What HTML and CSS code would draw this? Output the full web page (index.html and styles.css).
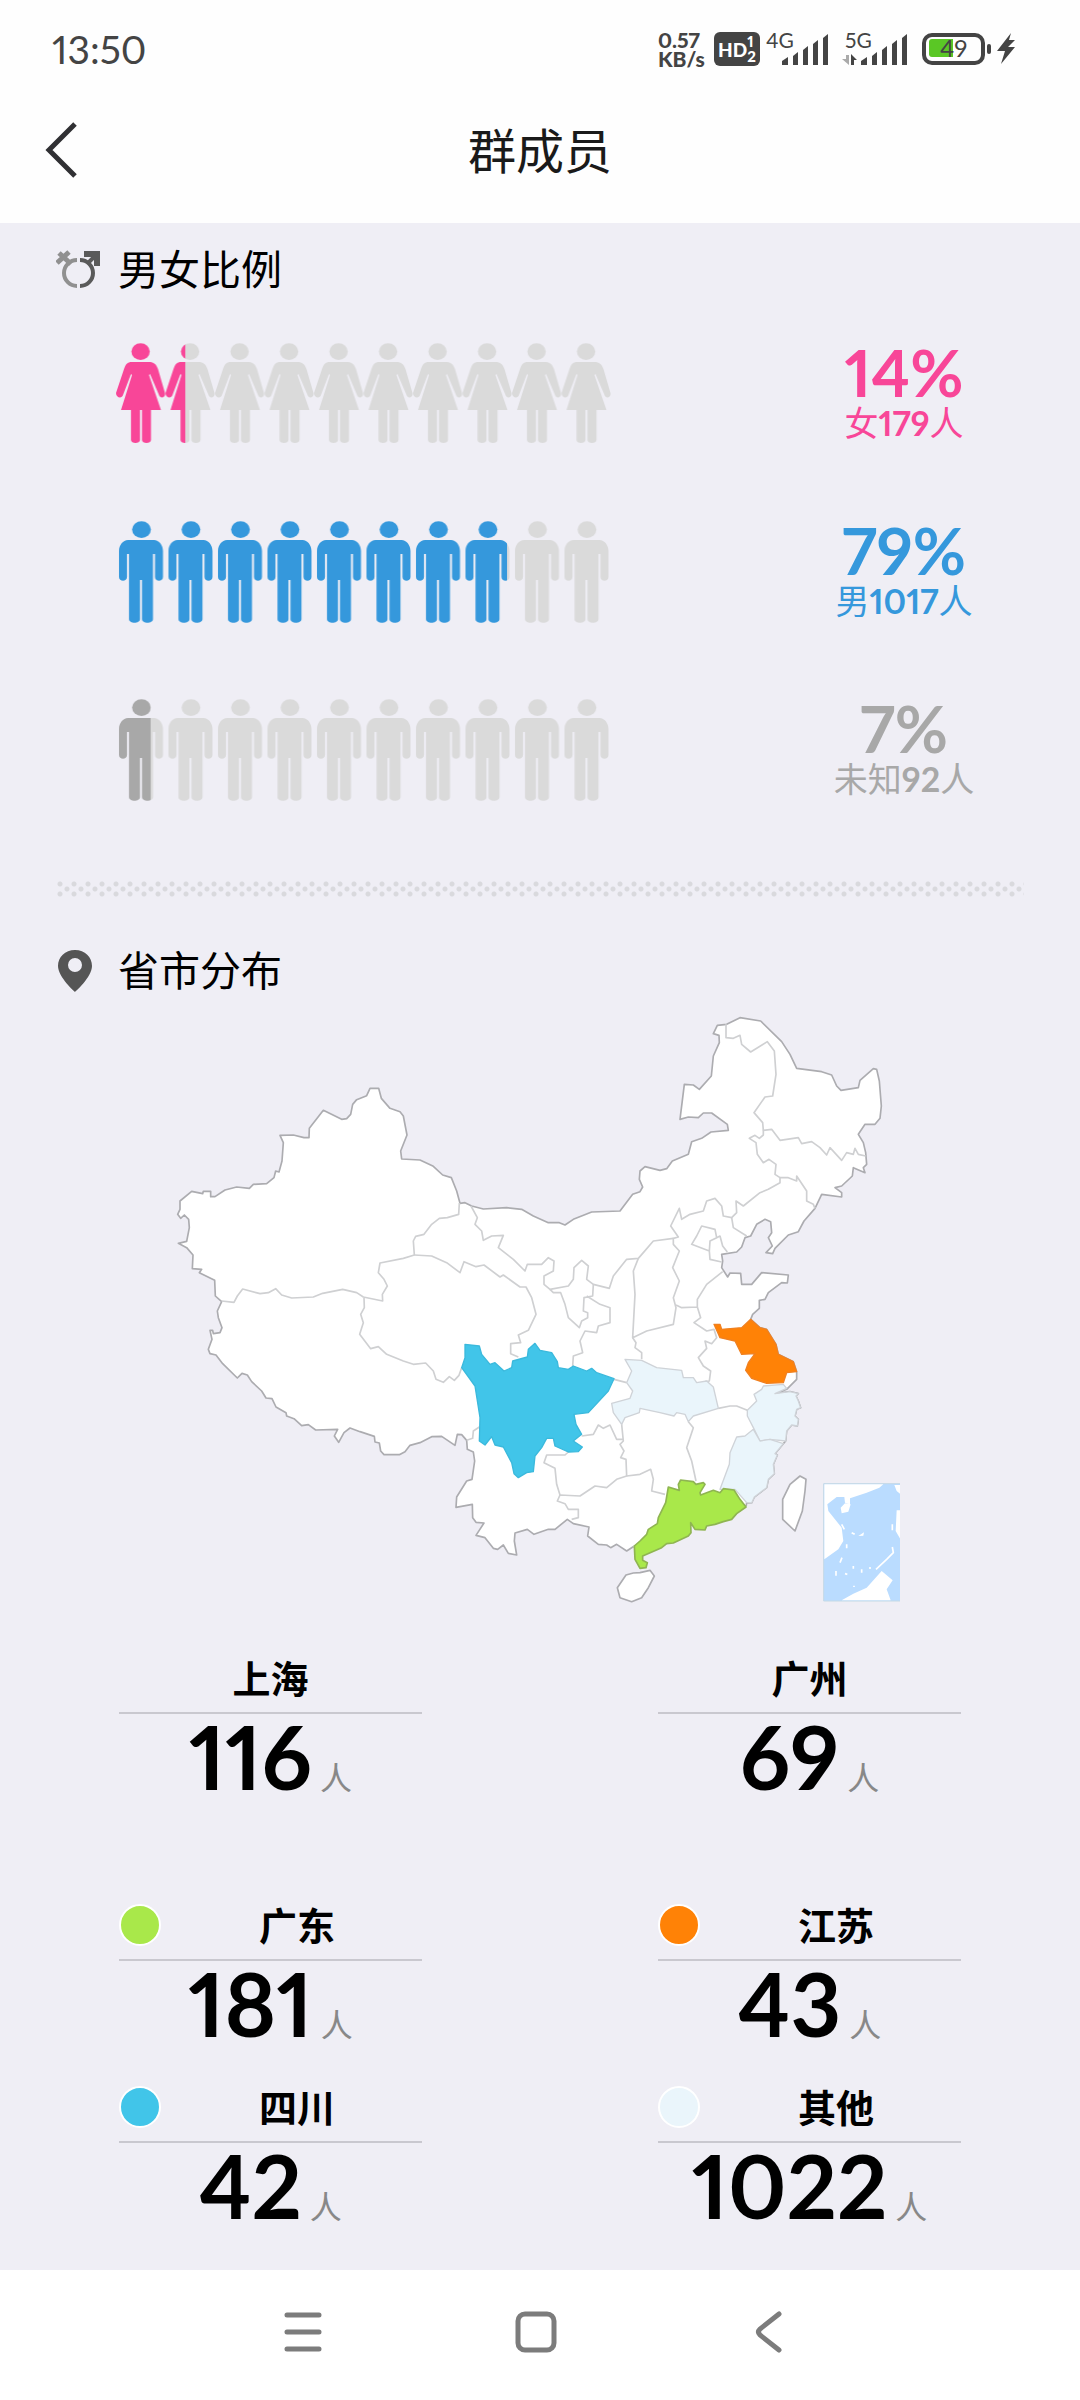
FILE: index.html
```html
<!DOCTYPE html>
<html lang="zh-CN">
<head>
<meta charset="utf-8">
<meta name="viewport" content="width=device-width, initial-scale=1">
<title>群成员</title>
<link rel="stylesheet" href="styles.css">
</head>
<body>
<div class="page">
  <div class="status-bar">
    <time class="clock">13:50</time>
    <div class="status-icons">
      <div class="net-speed"><span>0.57</span><span>KB/s</span></div>
      <div class="hd-badge"><span>HD</span><span class="hd-lines"><span>1</span><span>2</span></span></div>
      <svg class="signal signal-4g" viewBox="0 -6 64 48" aria-label="4G">
        <text class="signal-text" x="0" y="17">4G</text>
        <path d="M16 30l6-4v8h-6zM27 25l5-4v13h-5zM37 19l5-4v19h-5zM47 13l5-4v25h-5zM57 7l5-4v31h-5z"/>
      </svg>
      <svg class="signal signal-5g" viewBox="0 -6 68 48" aria-label="5G">
        <text class="signal-text" x="3" y="17">5G</text>
        <path class="arrow-down" d="M4 24h3v10L0 28h4z"/>
        <path d="M9 34V23l6 6h-3v5zM19 30l6-4v8h-6zM30 25l5-4v13h-5zM40 19l5-4v19h-5zM50 13l5-4v25h-5zM60 7l5-4v31h-5z"/>
      </svg>
      <svg class="battery" viewBox="0 0 96 34" aria-label="49%">
        <rect x="2" y="3" width="59" height="28" rx="8" fill="none" stroke="#444" stroke-width="4"/>
        <path d="M10 7h21v18H10q-3 0-3-3V10q0-3 3-3z" fill="#5ac725"/>
        <text class="battery-text" x="18" y="25">49</text>
        <rect x="65" y="12" width="4" height="10" rx="2"/>
        <path d="M89 1L75 19h8l-4 13 14-17h-7l7-7h-6z"/>
      </svg>
    </div>
  </div>

  <header class="title-bar">
    <button class="back" type="button" aria-label="返回">
      <svg viewBox="0 0 34 58"><path d="M30 2L4 28l26 26" fill="none" stroke="#303033" stroke-width="5"/></svg>
    </button>
    <h1>群成员</h1>
  </header>

  <main class="content">
    <section class="gender">
      <h2 class="section-title">
        <svg class="title-icon" viewBox="0 0 44 40">
          <g fill="none" stroke-width="4">
            <path d="M21 10a13 13 0 0 0 0 26" stroke="#909090"/>
            <path d="M15 14L3 3M1 13l12-11" stroke="#909090" stroke-width="5"/>
            <path d="M24 36a13 13 0 0 0 0-26M31 14l9-9" stroke="#5a5a5a"/>
            <path d="M28 4h13v12" stroke="#5a5a5a" stroke-width="6"/>
          </g>
        </svg>
        男女比例
      </h2>
      <svg class="defs" aria-hidden="true">
        <defs>
          <pattern id="womanTile" width="49.5" height="104" patternUnits="userSpaceOnUse">
            <ellipse cx="24.6" cy="8.6" rx="9.2" ry="8.4" fill="#fff"/>
            <path fill="#fff" d="M16 19h17c5 0 7 2 9 7l7 24c1 5-5 6-6 2L34 31l-1 1 12 35H35v30c0 4-9 4-9 0V67h-2v30c0 4-9 4-9 0V67H5l11-35-1-1-8 21c-1 4-7 3-7-2l8-24c2-5 3-7 8-7z"/>
          </pattern>
          <pattern id="manTile" width="49.5" height="104" patternUnits="userSpaceOnUse">
            <ellipse cx="25.5" cy="8.6" rx="9.4" ry="8.4" fill="#fff"/>
            <path fill="#fff" d="M12 19h26c5 0 9 5 9 11v26c0 5-8 5-8 0V33h-2v65c0 5-11 5-11 0V59h-2v39c0 5-11 5-11 0V33h-2v23c0 5-8 5-8 0V30c0-6 4-11 9-11z"/>
          </pattern>
          <mask id="women"><rect width="495" height="104" fill="url(#womanTile)"/></mask>
          <mask id="men"><rect width="495" height="104" fill="url(#manTile)"/></mask>
        </defs>
      </svg>
      <div class="ratios">
        <div class="ratio female">
          <svg class="people" viewBox="0 0 495 104"><g mask="url(#women)"><rect width="495" height="104" fill="#dadada"/><rect width="14%" height="104" fill="currentColor"/></g></svg>
          <p class="ratio-text"><b class="percent">14%</b><span class="count">女<b>179</b>人</span></p>
        </div>
        <div class="ratio male">
          <svg class="people" viewBox="0 0 495 104"><g mask="url(#men)"><rect width="495" height="104" fill="#dadada"/><rect width="79%" height="104" fill="currentColor"/></g></svg>
          <p class="ratio-text"><b class="percent">79%</b><span class="count">男<b>1017</b>人</span></p>
        </div>
        <div class="ratio unknown">
          <svg class="people" viewBox="0 0 495 104"><g mask="url(#men)"><rect width="495" height="104" fill="#dadada"/><rect width="7%" height="104" fill="currentColor"/></g></svg>
          <p class="ratio-text"><b class="percent">7%</b><span class="count">未知<b>92</b>人</span></p>
        </div>
      </div>
    </section>

    <div class="divider"></div>

    <section class="region">
      <h2 class="section-title">
        <svg class="title-icon" viewBox="0 0 44 44"><path fill="#555" fill-rule="evenodd" d="M19 1C9 1 2 8 2 17c0 11 17 26 17 26s17-15 17-26C36 8 29 1 19 1zm0 8a7 7 0 1 1 0 14 7 7 0 0 1 0-14z"/></svg>
        省市分布
      </h2>
      <div class="map-area">
      <svg class="map" viewBox="-840 -450 2220 1830" role="img" aria-label="省市分布">
        <path class="land" d="M863 378L845 350 848 330 845 310 890 303 905 288 915 260 932 255 950 220 975 205 992 212 995 245 985 260 997 285 978 305 998 308 1005 292 1045 252 1075 242 1092 210 1125 172 1145 130 1205 138 1205 125 1185 110 1205 105 1237 75 1240 50 1275 65 1270 50 1280 40 1277 5 1270-25 1255-50 1275-80 1305-80 1320-98 1324-135 1318-210 1310-245 1300-247 1260-212 1255-190 1203-182 1190-195 1175-228 1145-238 1070-248 1050-290 1025-328 962-390 900-400 860-380 832-377 820-352 837-347 838-325 820-285 814-225 778-185 760-198 733-200 720-95 745-102 775-100 790-114 815-114 862-80 865-62 813-57 785-38 755-28 745 10 697 30 680 53 660 58 615 47 600 60 598 85 608 108 600 122 578 130 540 180 455 183 400 205 375 222 358 215 325 215 280 195 245 175 200 170 130 174 95 165 75 155 60 157 50 120 34 80 8 72-20 46-60 27-115 24-118 0-99-48-110-105-120-118-150-128-176-158-184-188-210-188-220-166-250-154-262-140-268-110-280-97-295-95-350-122-392-68-393-40-408-40-440-48-480-47-470-25-474 30-483 63-493 60-498 80-520 98-560 100-572 112-610 108-645 117-675 137-688 137-688 121-710 121-712 128-745 121-780 150-780 175-787 190-778 202-767 192-754 205-752 230-760 271-785 277-760 290-741 312-743 353-715 355-722 365-676 388-674 435-655 452-668 480-665 500-654 530-660 545-680 548-682 538-690 538-684 565-695 595-690 608-672 612-652 638-608 681-594 667-578 672-565 692-535 720-522 741-504 743-492 768-462 785-460 795-438 803-415 824-395 821-373 837-307 835-317 855-304 874-288 845-270 831-240 842-197 856-195 873-182 876-178 900-168 911-122 911-105 902-90 883-60 875-25 857 5 856 45 883 52 850 65 851 80 868 82 895 100 903 104 930 96 985 80 990 50 1038 48 1069 97 1060 98 1100 108 1114 132 1116 108 1153 135 1160 160 1192 173 1195 190 1182 205 1207 230 1212 223 1170 225 1146 262 1135 282 1150 325 1135 345 1135 382 1105 400 1118 447 1128 443 1155 475 1180 500 1182 512 1190 530 1180 560 1200 583 1185 665 1170 752 1115 850 1080 918 1068 920 1055 935 1056 943 1038 980 1010 985 985 1003 968 1000 940 1012 912 1005 908 1030 878 1037 870 1040 840 1055 822 1072 825 1075 805 1065 795 1070 775 1082 770 1075 750 1068 735 1075 728 1050 722 1005 728 1040 715 1070 685 1070 662 1060 632 1015 610 1008 580 980 535 960 530 932 505 938 490 958 472 958 448 975 445 985 425 1025 395 1042 396 1045 372 965 365 935 400 905 400 902 367 870 366z"/>
        <path class="land" d="M1080 975L1098 985 1095 1020 1087 1080 1065 1140 1028 1105 1028 1045 1050 1000z"/>
        <path class="land" d="M558 1272L580 1266 600 1265 630 1258 643 1275 625 1310 605 1340 575 1352 540 1340 532 1310z"/>
        <g class="border">
          <path d="M58 156L56 190 22 200-2 202-25 220-48 250-73 256-80 270-77 312-110 322-180 336-185 365-168 385-158 405-173 430-172 450-230 438-250 425-292 415-352 427-380 438-445 441-475 432-493 413-515 425-540 428-592 414-608 435-618 454-655 450"/>
          <path d="M-228 440L-227 470-238 490-230 515-241 550-208 593-185 587-160 610-110 630-80 640-43 636-20 660-12 685 10 694 28 677 43 688 57 673 65 650"/>
          <path d="M-77 312L-25 315 20 335 60 365 72 332 108 347 132 342 180 378 190 372 240 408 258 408 275 440 288 490 265 538 235 552 242 575 212 578 212 608 235 618"/>
          <path d="M93 165L112 200 105 220 125 240 130 268 155 255 190 253 175 290 220 325 255 360 262 340 305 340 325 320 342 330 340 360 312 375 312 400 330 415 385 405 400 385 402 350 425 328 445 345 440 385 460 400 508 412 520 375 560 325 595 322 610 305 640 270 700 262"/>
          <path d="M330 415L340 425 362 425 375 460 385 500 418 530 425 510 443 500 443 485 430 480 432 440 458 435 460 400M440 435L480 460 510 470 510 515 475 525 470 545 435 540 420 570 428 605 400 615 398 645"/>
          <path d="M595 322L580 360 585 430 578 560 620 540 700 520 708 470 700 440 718 390 698 350 718 300 700 280 700 262 715 258 692 225 718 172 725 205 750 190 790 180 800 150 825 142 845 165 850 195 875 200 890 185 888 150 910 165 960 125 985 115 1020 95 1020 80 1045 80 1070 90 1070 75 1100 120 1100 150 1120 160 1125 172"/>
          <path d="M578 560L588 575 585 590 605 605 605 625M875 200L880 230 920 255M755 280L770 255 785 225 825 235 830 260 810 270 808 300zM830 260L840 255 848 285 862 303M808 300L810 325 845 333"/>
          <path d="M1020 80L1005 70 1008 40 987 25 970 35 952 10 948-25 928-38 945-47 958-38 970-48 970-62 995-65 1020-32 1075-40 1085-22 1115-28 1140-10 1160 12 1170-10 1205 28 1220 5 1240 10 1245-8 1255 10 1277 15"/>
          <path d="M970-62L968-85 942-115 975-162 998-165 1008-230 1003-300 982-328 932-297 905-320 900-347 880-338 858-340 858-380"/>
          <path d="M848 362L800 400 772 445 772 468 725 470 708 462M772 468L782 500 762 515 800 540 822 535 830 560 815 578 795 570 800 592 775 620 790 645 812 660 808 690 795 692"/>
          <path d="M118 828L100 840 98 862 80 868M522 685L560 695M425 855L460 850 475 822 490 832 510 822 530 865 548 865M545 820L550 870 540 880 552 900 542 920 558 925 560 975 530 985 500 1010 465 1005 420 1035 360 1032 352 1050 375 1058 385 1075 415 1075 415 1100 395 1105"/>
          <path d="M385 903L375 912 320 912 312 935 345 952 350 1000 360 1032M560 975L600 970 632 955 640 985 635 1020 675 1030M745 812L760 830 740 890 755 930 768 990M835 772L870 765 890 765 922 778"/>
        </g>
        <g class="other">
          <path d="M555 625L605 628 650 650 725 658 730 680 760 680 770 695 800 690 820 708 835 772 760 795 745 812 735 790 710 785 702 795 660 785 600 772 598 785 555 800 545 820 520 785 515 757 570 742 578 720 560 695 575 660z"/>
          <path d="M970 705L1030 700 1040 712 1005 728 1050 722 1075 728 1068 735 1075 750 1082 770 1070 775 1065 795 1075 805 1072 825 1055 822 1040 840 1037 870 990 865 960 870 940 830 922 795 922 778 950 750 942 730 965 715z"/>
          <path d="M940 835L915 855 890 858 870 905 868 940 840 1015 885 1015 920 1055 935 1056 943 1038 980 1010 985 985 1003 968 1000 940 1012 912 1005 908 1030 878 990 865 960 870z"/>
        </g>
        <path class="sichuan" d="M75 580L118 585 125 610 150 640 165 635 192 660 215 650 218 630 262 618 265 595 285 577 300 598 335 605 352 632 355 650 385 655 400 645 440 660 455 652 470 665 522 683 505 720 445 785 402 790 408 820 425 850 400 870 427 888 415 902 385 903 345 885 340 862 320 862 305 890 285 915 280 962 260 965 235 980 222 968 215 935 190 888 165 882 155 857 135 882 118 870 120 800 105 705 65 650 75 620z"/>
        <path class="jiangsu" d="M822 520L840 520 845 535 880 532 905 530 932 505 960 530 980 535 1008 580 1015 610 1060 632 1070 662 1040 665 1030 695 980 697 935 682 917 658 925 635 945 608 905 610 885 570 840 560z"/>
        <path class="sea" d="M583 1185L752 1115 918 1068 895 1120 650 1230z"/>
        <path class="guangdong" d="M583 1185L585 1225 600 1252 618 1250 622 1235 608 1228 608 1215 665 1190 680 1178 700 1176 745 1155 753 1145 752 1115 765 1135 795 1137 800 1125 825 1120 850 1112 875 1105 890 1088 918 1068 900 1045 882 1017 850 1013 840 1025 820 1018 782 1032 780 1025 795 1000 790 995 768 1000 760 992 722 987 715 1000 718 1018 685 1008 677 1055 655 1100 652 1118 625 1135 620 1150 600 1170z"/>
        <g transform="translate(480 270)">
          <rect class="inset" x="671" y="728" width="233" height="352"/>
          <path class="inset-land" d="M673 730H850L838 740 800 755 750 772 750 790 735 785 733 768 710 768 682 790 685 810 725 860 730 900 715 925 673 955zM722 800L735 787 752 790 745 812 725 817zM883 732H902V760L890 750zM890 808H902V896L887 870zM725 1078L760 1058 800 1040 845 990 878 1018 860 1045 872 1078zM775 885L792 874 790 884z"/>
          <path class="inset-line" d="M828 985L860 955 880 935 877 918M725 850L733 865M755 875L764 880M740 910V922M726 950L720 965M708 990V1004M760 975V983M785 985V995M810 978V984M735 998L742 1000M762 1034V1038M877 850V868"/>
        </g>
      </svg>
      </div>

      <div class="stats cities">
        <div class="stat"><h3>上海</h3><p><b>116</b><span>人</span></p></div>
        <div class="stat"><h3>广州</h3><p><b>69</b><span>人</span></p></div>
      </div>
      <div class="stats provinces">
        <div class="stat"><h3><i class="dot guangdong-dot"></i><span>广东</span></h3><p><b>181</b><span>人</span></p></div>
        <div class="stat"><h3><i class="dot jiangsu-dot"></i><span>江苏</span></h3><p><b>43</b><span>人</span></p></div>
        <div class="stat"><h3><i class="dot sichuan-dot"></i><span>四川</span></h3><p><b>42</b><span>人</span></p></div>
        <div class="stat"><h3><i class="dot other-dot"></i><span>其他</span></h3><p><b>1022</b><span>人</span></p></div>
      </div>
    </section>
  </main>

  <nav class="system-nav">
    <button type="button" aria-label="最近任务"><svg viewBox="0 0 48 48"><path d="M8 7h32M8 24h32M8 41h32"/></svg></button>
    <button type="button" aria-label="主屏幕"><svg viewBox="0 0 48 48"><rect x="6" y="6" width="36" height="36" rx="7"/></svg></button>
    <button type="button" aria-label="返回"><svg viewBox="0 0 48 48"><path d="M34 6L15 21q-3 3 0 6L34 42"/></svg></button>
  </nav>
</div>
</body>
</html>
```
FILE: styles.css
```css
* {
  box-sizing: border-box;
}

body,
h1,
h2,
h3,
p {
  margin: 0;
  font-weight: 400;
}

body {
  background: #fefefe;
  color: #000;
  font-family: Lato, "Noto Sans CJK SC", sans-serif;
  font-variant-numeric: proportional-nums;
}

button {
  padding: 0;
  border: 0;
  background: none;
}

svg {
  display: block;
}

.page {
  display: flex;
  flex-direction: column;
  min-height: 100vh;
}

/* status bar */

.status-bar {
  display: flex;
  align-items: center;
  justify-content: space-between;
  height: 80px;
  padding: 18px 62px 0 52px;
  color: #444;
}

.clock {
  font-size: 39px;
  line-height: 48px;
}

.status-icons {
  display: flex;
  align-items: center;
  fill: #444;
}

.net-speed {
  display: flex;
  flex-direction: column;
  width: 48px;
  margin-right: 8px;
  font-size: 21px;
  font-weight: 900;
  line-height: 19px;
}

.hd-badge {
  display: flex;
  align-items: center;
  justify-content: center;
  width: 46px;
  height: 34px;
  margin-right: 6px;
  border-radius: 6px;
  background: #444;
  color: #fff;
  font-size: 19px;
  font-weight: 900;
}

.hd-lines {
  display: flex;
  flex-direction: column;
  font-size: 15px;
  line-height: 15px;
}

.signal {
  height: 48px;
}

.signal-4g {
  width: 64px;
  margin-right: 12px;
}

.signal-5g {
  width: 68px;
  margin-right: 12px;
}

.signal-text {
  font-size: 21px;
}

.arrow-down {
  fill: #aaa;
}

.battery {
  width: 96px;
  height: 34px;
}

.battery-text {
  font-size: 24px;
}

/* title bar */

.title-bar {
  display: grid;
  grid-template-columns: 79px 1fr 79px;
  align-items: center;
  height: 143px;
  padding-bottom: 2px;
}

.back {
  justify-self: end;
}

.back svg {
  width: 34px;
  height: 58px;
}

.title-bar h1 {
  color: #1a1a1a;
  font-size: 48px;
  line-height: 64px;
  text-align: center;
}

/* content */

.content {
  flex: 1;
  padding-bottom: 42px;
  background: #efeef5;
}

.section-title {
  display: flex;
  align-items: center;
  gap: 18px;
  padding-left: 56px;
  font-size: 41px;
  line-height: 60px;
}

.title-icon {
  width: 44px;
  height: 44px;
}

.gender {
  padding-top: 17px;
}

.defs {
  width: 0;
  height: 0;
}

.ratios {
  padding-top: 6px;
}

.ratio {
  display: flex;
  align-items: center;
  justify-content: space-between;
  height: 178px;
  padding: 0 16px 0 116px;
}

.people {
  width: 495px;
  height: 104px;
}

.ratio-text {
  display: flex;
  flex-direction: column;
  width: 320px;
  padding-bottom: 4px;
  text-align: center;
}

.percent {
  font-size: 65px;
  line-height: 60px;
}

.count {
  font-size: 34px;
  line-height: 42px;
}

.female {
  color: #f84698;
}

.male {
  color: #3598dc;
}

.unknown {
  color: #a8a8a8;
}

.divider {
  height: 16px;
  margin: 41px 56px 0;
  background:
    radial-gradient(circle at 4px 3px, #d9d9dd 2px, transparent 3px),
    radial-gradient(circle at 11px 8px, #d9d9dd 2px, transparent 3px),
    radial-gradient(circle at 4px 13px, #d9d9dd 2px, transparent 3px);
  background-size: 14px 16px;
}

.region {
  padding-top: 44px;
}

/* map */

.map-area {
  display: flex;
  justify-content: center;
  padding-right: 20px;
}

.map {
  width: 740px;
  max-width: 100%;
  stroke-linejoin: round;
}

.land {
  fill: #fff;
  stroke: #acacb0;
  stroke-width: 5;
}

.border {
  fill: none;
  stroke: #cfd0d2;
  stroke-width: 5;
}

.other {
  fill: #eaf5fb;
  stroke: #cfd3d8;
  stroke-width: 4;
}

.sichuan {
  fill: #41c5e9;
  stroke: #3bb9dc;
  stroke-width: 4;
}

.jiangsu {
  fill: #ff8206;
  stroke: #f08020;
  stroke-width: 4;
}

.sea {
  fill: #efeef5;
  stroke: #efeef5;
  stroke-width: 6;
}

.guangdong {
  fill: #a9e84a;
  stroke: #8fb552;
  stroke-width: 5;
}

.inset {
  fill: #badcff;
  stroke: #c4dae6;
  stroke-width: 3;
}

.inset-land {
  fill: #fff;
}

.inset-line {
  fill: none;
  stroke: #fff;
  stroke-width: 5;
}

/* numbers */

.stats {
  display: grid;
  grid-template-columns: 303px 303px;
  justify-content: center;
  column-gap: 236px;
  row-gap: 36px;
}

.cities {
  margin-top: 42px;
}

.provinces {
  margin-top: 101px;
}

.stat h3 {
  display: flex;
  align-items: center;
  justify-content: center;
  height: 61px;
  padding-bottom: 10px;
  border-bottom: 2px solid #c9c8cf;
  font-size: 38px;
  font-weight: 700;
  line-height: 48px;
}

.stat h3 span {
  flex: 1;
  padding-left: 11px;
  text-align: center;
}

.dot {
  width: 42px;
  height: 42px;
  border: 2px solid #fff;
  border-radius: 50%;
}

.guangdong-dot {
  background: #a9e84a;
}

.jiangsu-dot {
  background: #ff8206;
}

.sichuan-dot {
  background: #41c5e9;
}

.other-dot {
  background: #eaf5fb;
}

.stat p {
  display: flex;
  align-items: baseline;
  justify-content: center;
  gap: 8px;
  height: 85px;
}

.stat b {
  font-size: 88px;
  line-height: 84px;
}

.stat p span {
  color: #888;
  font-size: 32px;
  line-height: 40px;
}

/* system navigation */

.system-nav {
  display: flex;
  justify-content: center;
  gap: 153px;
  height: 130px;
  padding: 0 8px 6px 0;
  background: #fff;
}

.system-nav button {
  display: grid;
  place-items: center;
  width: 80px;
}

.system-nav svg {
  width: 48px;
  height: 48px;
  fill: none;
  stroke: #7c7c7c;
  stroke-width: 5;
  stroke-linecap: round;
}
```
